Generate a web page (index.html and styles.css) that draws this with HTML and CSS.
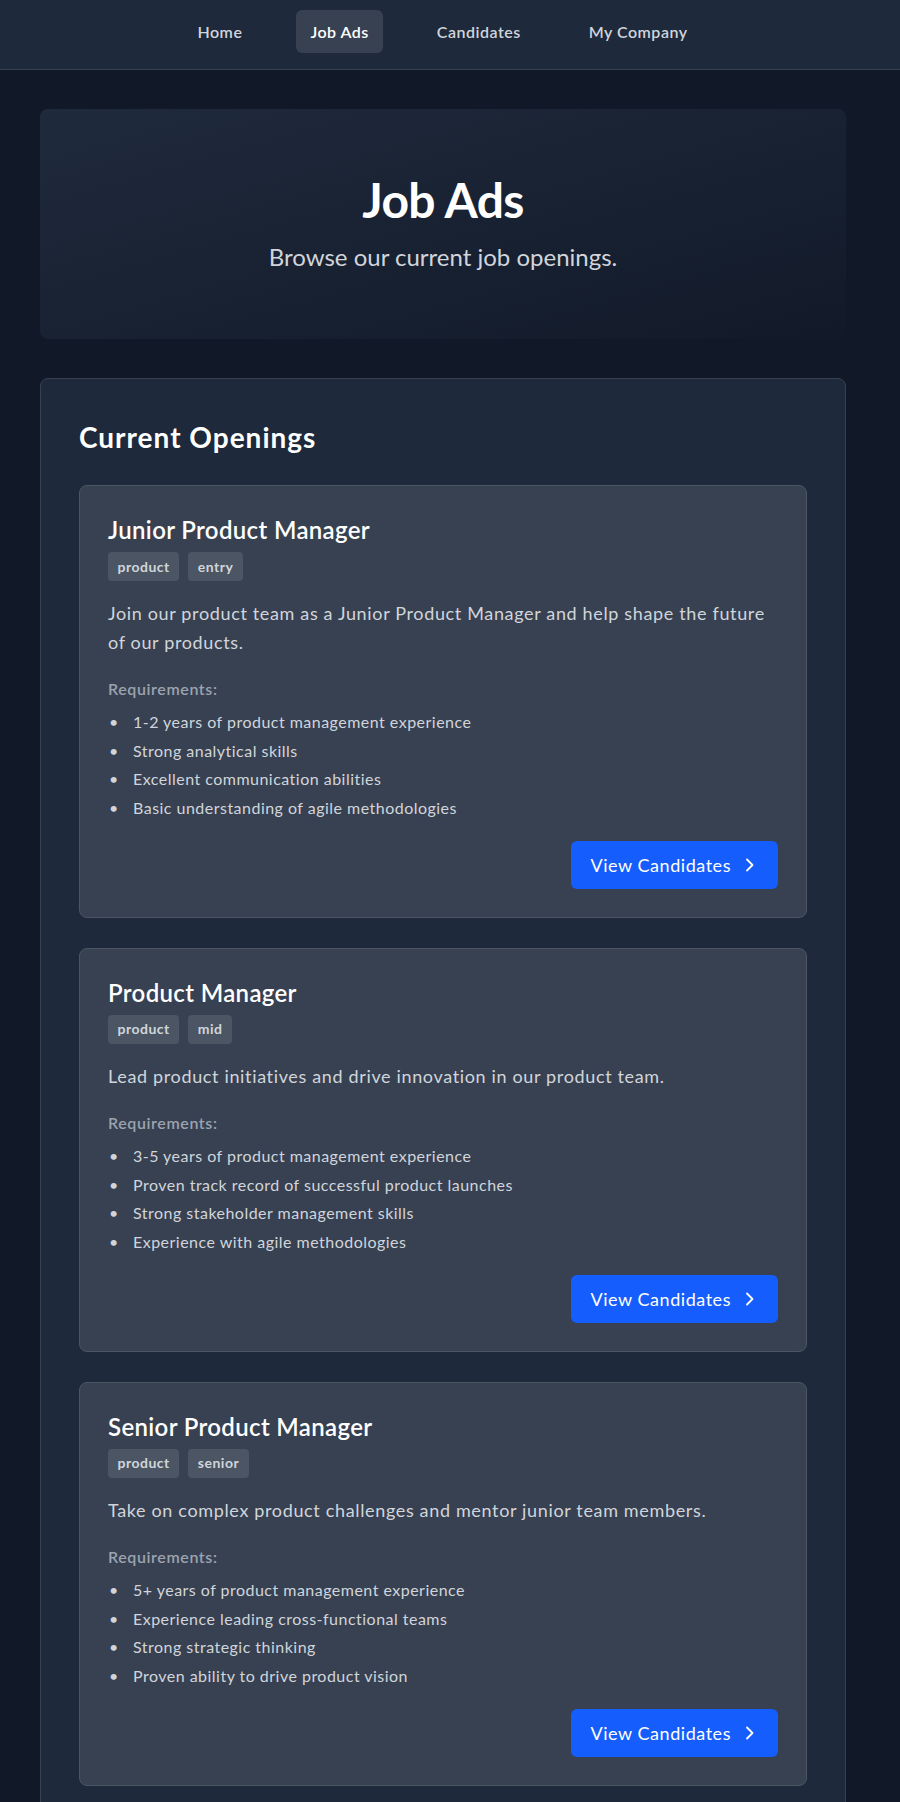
FILE: index.html
```html
<!DOCTYPE html>
<html lang="en">
<head>
<meta charset="utf-8">
<title>Job Ads</title>
<link rel="stylesheet" href="styles.css">
</head>
<body>
<nav class="topnav">
  <div class="nav-inner">
    <a class="nav-link" href="#">Home</a>
    <a class="nav-link active" href="#">Job Ads</a>
    <a class="nav-link" href="#">Candidates</a>
    <a class="nav-link" href="#">My Company</a>
  </div>
</nav>
<main class="page">
  <section class="hero">
    <h1 class="hero-title">Job Ads</h1>
    <p class="hero-sub">Browse our current job openings.</p>
  </section>
  <section class="openings">
    <h2 class="openings-title">Current Openings</h2>
    <div class="job-list">
      <article class="job-card">
        <h3 class="job-title">Junior Product Manager</h3>
        <div class="tags"><span class="tag">product</span><span class="tag">entry</span></div>
        <p class="job-desc">Join our product team as a Junior Product Manager and help shape the future of our products.</p>
        <p class="req-label">Requirements:</p>
        <ul class="req-list">
          <li>1-2 years of product management experience</li>
          <li>Strong analytical skills</li>
          <li>Excellent communication abilities</li>
          <li>Basic understanding of agile methodologies</li>
        </ul>
        <div class="job-actions">
          <a class="btn" href="#">View Candidates<svg class="chev" viewBox="0 0 12 14" width="12" height="14"><path d="M3 1.5 L8.5 7 L3 12.5" fill="none" stroke="currentColor" stroke-width="1.8" stroke-linecap="round" stroke-linejoin="round"/></svg></a>
        </div>
      </article>
      <article class="job-card">
        <h3 class="job-title">Product Manager</h3>
        <div class="tags"><span class="tag">product</span><span class="tag">mid</span></div>
        <p class="job-desc">Lead product initiatives and drive innovation in our product team.</p>
        <p class="req-label">Requirements:</p>
        <ul class="req-list">
          <li>3-5 years of product management experience</li>
          <li>Proven track record of successful product launches</li>
          <li>Strong stakeholder management skills</li>
          <li>Experience with agile methodologies</li>
        </ul>
        <div class="job-actions">
          <a class="btn" href="#">View Candidates<svg class="chev" viewBox="0 0 12 14" width="12" height="14"><path d="M3 1.5 L8.5 7 L3 12.5" fill="none" stroke="currentColor" stroke-width="1.8" stroke-linecap="round" stroke-linejoin="round"/></svg></a>
        </div>
      </article>
      <article class="job-card">
        <h3 class="job-title">Senior Product Manager</h3>
        <div class="tags"><span class="tag">product</span><span class="tag">senior</span></div>
        <p class="job-desc">Take on complex product challenges and mentor junior team members.</p>
        <p class="req-label">Requirements:</p>
        <ul class="req-list">
          <li>5+ years of product management experience</li>
          <li>Experience leading cross-functional teams</li>
          <li>Strong strategic thinking</li>
          <li>Proven ability to drive product vision</li>
        </ul>
        <div class="job-actions">
          <a class="btn" href="#">View Candidates<svg class="chev" viewBox="0 0 12 14" width="12" height="14"><path d="M3 1.5 L8.5 7 L3 12.5" fill="none" stroke="currentColor" stroke-width="1.8" stroke-linecap="round" stroke-linejoin="round"/></svg></a>
        </div>
      </article>
    </div>
  </section>
</main>
</body>
</html>
```

FILE: styles.css
```css
* { box-sizing: border-box; }
html, body { margin: 0; padding: 0; }
body {
  background: #111827;
  font-family: "Lato", "Open Sans", "Noto Sans", sans-serif;
  color: #f9fafb;
}
a { text-decoration: none; }

.topnav {
  background: #1e293b;
  border-bottom: 1px solid #334155;
}
.nav-inner {
  display: flex;
  justify-content: center;
  gap: 40px;
  padding: 10px 15px 16px 0;
}
.nav-link {
  display: block;
  padding: 10px 14px;
  line-height: 23px;
  font-size: 16px;
  font-weight: 600;
  letter-spacing: 0.5px;
  color: #d1d5db;
  border-radius: 6px;
}
.nav-link.active {
  background: #374151;
  color: #ffffff;
}

.page {
  width: 806px;
  margin: 39px 0 0 40px;
}

.hero {
  background: linear-gradient(to bottom right, #1f2a3c, #121a29);
  border-radius: 8px;
  padding: 67px 20px 66px;
  text-align: center;
}
.hero-title {
  margin: 0;
  font-size: 48px;
  line-height: 48px;
  font-weight: 700;
  letter-spacing: -0.6px;
  color: #ffffff;
}
.hero-sub {
  margin: 17px 0 0;
  font-size: 24px;
  line-height: 32px;
  color: #d1d5db;
}

.openings {
  margin-top: 39px;
  background: #1e293b;
  border: 1px solid #374151;
  border-radius: 8px;
  padding: 40px 38px 38px;
}
.openings-title {
  margin: 0 0 30px;
  font-size: 28px;
  line-height: 36px;
  font-weight: 700;
  letter-spacing: 1px;
  color: #ffffff;
}
.job-list {
  display: flex;
  flex-direction: column;
  gap: 30px;
}
.job-card {
  background: #374151;
  border: 1px solid #4b5563;
  border-radius: 8px;
  padding: 28px;
}
.job-title {
  margin: 0;
  font-size: 24px;
  line-height: 32px;
  font-weight: 600;
  letter-spacing: 0.35px;
  color: #ffffff;
}
.tags {
  display: flex;
  gap: 9px;
  margin-top: 6px;
}
.tag {
  background: #4b5563;
  color: #d1d5db;
  font-size: 14px;
  font-weight: 700;
  line-height: 20px;
  letter-spacing: 0.5px;
  padding: 4.5px 9.5px;
  border-radius: 4px;
}
.job-desc {
  margin: 18px 0 0;
  font-size: 18px;
  line-height: 28.5px;
  letter-spacing: 0.65px;
  color: #d1d5db;
}
.req-label {
  margin: 21px 0 0;
  font-size: 16px;
  line-height: 24px;
  font-weight: 600;
  letter-spacing: 0.6px;
  color: #9ca3af;
}
.req-list {
  margin: 9px 0 0;
  padding: 0;
  list-style: none;
  color: #d1d5db;
  font-size: 16px;
  line-height: 24px;
  letter-spacing: 0.48px;
}
.req-list li {
  display: flex;
}
.req-list li::before {
  content: "\2022";
  flex: 0 0 24px;
  padding-left: 1px;
}
.req-list li + li { margin-top: 4.5px; }
.job-actions {
  display: flex;
  justify-content: flex-end;
  margin-top: 21px;
}
.btn {
  display: inline-flex;
  align-items: center;
  gap: 13px;
  background: #155dfc;
  color: #ffffff;
  font-size: 18px;
  line-height: 28px;
  letter-spacing: 0.55px;
  padding: 10px 22px 10px 19px;
  border-radius: 6px;
}
.chev { display: block; }
```
